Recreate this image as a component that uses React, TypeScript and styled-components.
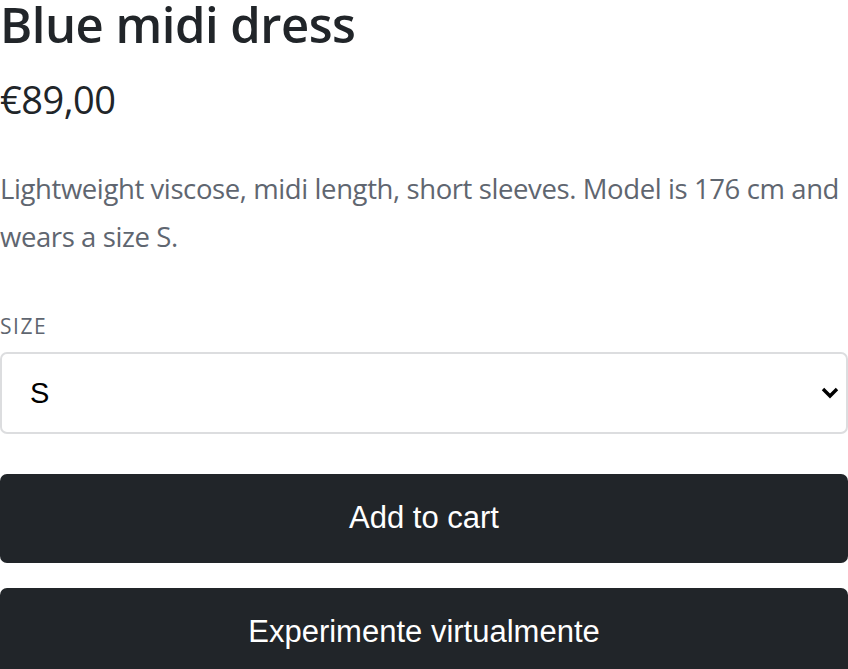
import React, { useState } from "react"
import styled, { createGlobalStyle } from "styled-components"

const GlobalStyle = createGlobalStyle`
  html, body {
    margin: 0;
    padding: 0;
    background: #ffffff;
  }
  body {
    font-family: "Open Sans", "Noto Sans", sans-serif;
    color: #212529;
  }
`

const Product = styled.div`
  width: 848px;
  display: flex;
  flex-direction: column;
`

const Title = styled.h1`
  margin: 0;
  font-size: 49px;
  font-weight: 600;
  line-height: 1;
  letter-spacing: -0.5px;
  color: #212529;
`

const Price = styled.div`
  margin-top: 28px;
  font-size: 38px;
  line-height: 1.2;
  letter-spacing: -0.5px;
  color: #212529;
`

const Description = styled.p`
  margin: 42px 0 0;
  font-size: 27.5px;
  line-height: 48px;
  letter-spacing: -0.4px;
  color: #5f6670;
`

const Label = styled.label`
  display: block;
  margin-top: 53px;
  font-size: 21px;
  line-height: 24px;
  letter-spacing: 1.5px;
  text-transform: uppercase;
  color: #5f6670;
`

const SelectWrap = styled.div`
  position: relative;
  margin-top: 14px;
`

const Select = styled.select`
  appearance: none;
  width: 100%;
  height: 82px;
  padding: 0 28px;
  border: 2px solid #dcdddf;
  border-radius: 7px;
  background: #ffffff;
  font-family: "Liberation Sans", Arial, sans-serif;
  font-size: 29px;
  color: #000000;
  outline: none;
`

const Chevron = styled.svg`
  position: absolute;
  right: 8px;
  top: 34px;
  pointer-events: none;
`

const Button = styled.button<{ $first?: boolean }>`
  width: 100%;
  height: 89px;
  margin-top: ${(p) => (p.$first ? "40px" : "25px")};
  border: none;
  border-radius: 7px;
  background: #212529;
  color: #ffffff;
  font-family: "Liberation Sans", Arial, sans-serif;
  font-size: 31px;
  cursor: pointer;
`

const App = (): JSX.Element => {
  const [size, setSize] = useState("S")

  return (
    <>
      <GlobalStyle />
      <Product>
        <Title>Blue midi dress</Title>
        <Price>€89,00</Price>
        <Description>
          Lightweight viscose, midi length, short sleeves. Model is 176 cm and wears a size S.
        </Description>
        <Label htmlFor="size">Size</Label>
        <SelectWrap>
          <Select id="size" value={size} onChange={(e) => setSize(e.target.value)}>
            <option>XS</option>
            <option>S</option>
            <option>M</option>
            <option>L</option>
            <option>XL</option>
          </Select>
          <Chevron width="20" height="14" viewBox="0 0 20 14">
            <path d="M3 3 L10 10 L17 3" fill="none" stroke="#000" strokeWidth="3.4" />
          </Chevron>
        </SelectWrap>
        <Button $first>Add to cart</Button>
        <Button>Experimente virtualmente</Button>
      </Product>
    </>
  )
}

export default App
